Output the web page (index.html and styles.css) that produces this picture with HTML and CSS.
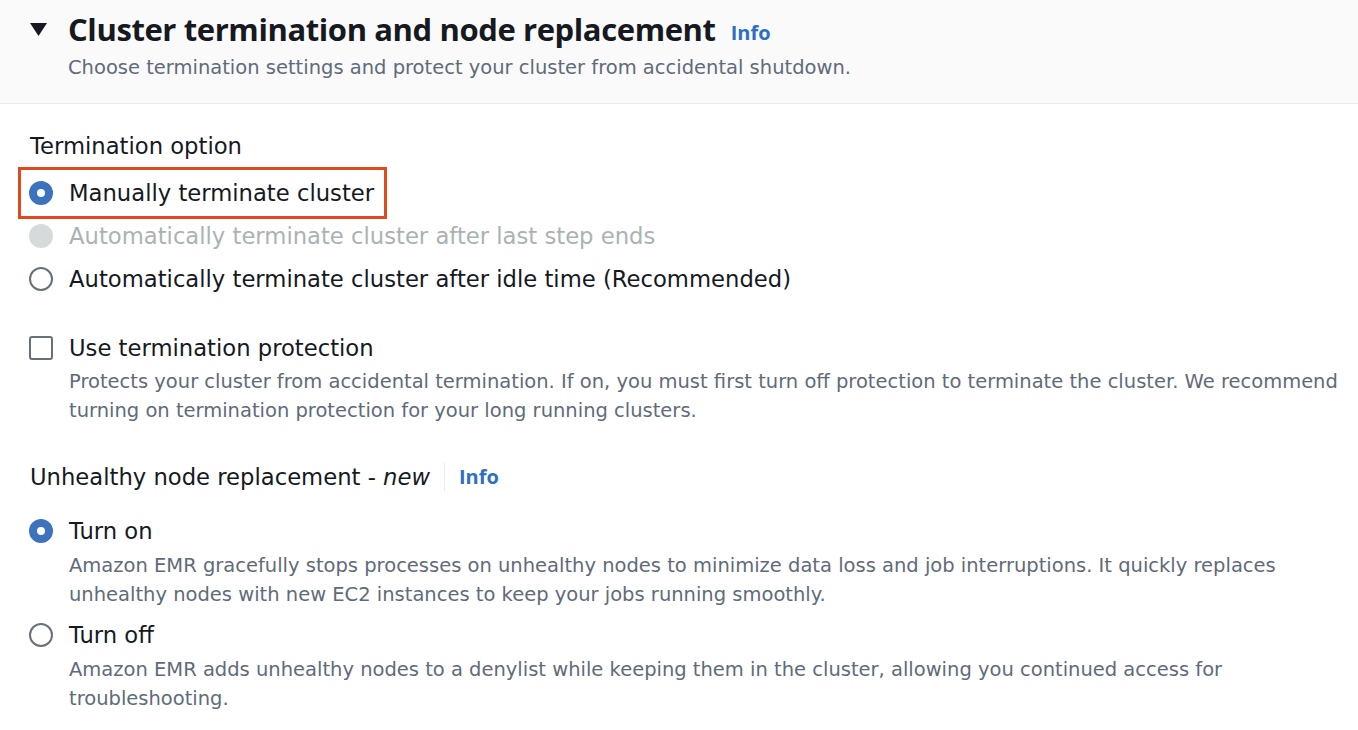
FILE: index.html
```html
<!DOCTYPE html>
<html lang="en">
<head>
<meta charset="utf-8">
<title>Cluster termination and node replacement</title>
<link rel="stylesheet" href="styles.css">
</head>
<body>
<section class="panel">
  <header class="panel-head">
    <div class="head-row">
      <svg class="caret" width="17" height="13" viewBox="0 0 17 13" aria-hidden="true"><polygon points="0,0 17,0 8.5,13" fill="#16191f"/></svg>
      <h2 class="title">Cluster termination and node replacement</h2>
      <a class="info info-head" href="#">Info</a>
    </div>
    <p class="head-desc">Choose termination settings and protect your cluster from accidental shutdown.</p>
  </header>

  <div class="panel-body">
    <div class="field-label">Termination option</div>
    <div class="radio-group">
      <div class="choice-line"><label class="choice highlighted"><span class="radio checked"></span><span class="choice-text">Manually terminate cluster</span></label></div>
      <div class="choice-line"><label class="choice disabled"><span class="radio dis"></span><span class="choice-text">Automatically terminate cluster after last step ends</span></label></div>
      <div class="choice-line"><label class="choice"><span class="radio"></span><span class="choice-text">Automatically terminate cluster after idle time (Recommended)</span></label></div>
    </div>

    <div class="check-block">
      <label class="choice"><span class="checkbox"></span><span class="choice-text">Use termination protection</span></label>
      <p class="desc">Protects your cluster from accidental termination. If on, you must first turn off protection to terminate the cluster. We recommend turning on termination protection for your long running clusters.</p>
    </div>

    <div class="field-label label-row">
      <span>Unhealthy node replacement - <em>new</em></span>
      <span class="sep"></span>
      <a class="info" href="#">Info</a>
    </div>

    <div class="option-block first">
      <label class="choice"><span class="radio checked"></span><span class="choice-text">Turn on</span></label>
      <p class="desc">Amazon EMR gracefully stops processes on unhealthy nodes to minimize data loss and job interruptions. It quickly replaces unhealthy nodes with new EC2 instances to keep your jobs running smoothly.</p>
    </div>
    <div class="option-block">
      <label class="choice"><span class="radio"></span><span class="choice-text">Turn off</span></label>
      <p class="desc">Amazon EMR adds unhealthy nodes to a denylist while keeping them in the cluster, allowing you continued access for troubleshooting.</p>
    </div>
  </div>
</section>
</body>
</html>
```

FILE: styles.css
```css
* { box-sizing: border-box; }
html, body { margin: 0; padding: 0; background: #ffffff; }
body {
  font-family: "DejaVu Sans", "Open Sans", sans-serif;
  color: #16191f;
  width: 1358px;
  height: 730px;
  overflow: hidden;
}
.panel { width: 100%; }
.panel-head {
  background: #fafafa;
  border-bottom: 1px solid #e9ebed;
  height: 104px;
  padding: 10px 0 0 30px;
}
.head-row {
  display: flex;
  align-items: center;
  height: 38px;
}
.caret { flex: none; margin-right: 21px; margin-top: 0; }
.title {
  margin: 0;
  font-family: "Open Sans", "Noto Sans", sans-serif;
  font-size: 31px;
  font-weight: 700;
  line-height: 38px;
  color: #16191f;
  letter-spacing: -0.4px;
}
.info {
  font-family: "Open Sans", "Noto Sans", sans-serif;
  color: #2f6fc0;
  font-weight: 700;
  text-decoration: none;
  font-size: 20px;
}
.info-head { margin-left: 15px; margin-top: 6px; }
.head-desc {
  margin: 6px 0 0 38px;
  font-size: 19.5px;
  line-height: 28px;
  color: #5f6b7a;
}
.panel-body { padding: 27px 0 0 29px; }
.field-label {
  font-size: 22.7px;
  line-height: 30px;
  margin-left: 1px;
}
.radio-group { margin-top: 17px; display: flex; flex-direction: column; gap: 13px; }
.choice-line { display: flex; }
.choice {
  display: inline-flex;
  align-items: center;
  gap: 16px;
  font-size: 22.7px;
  line-height: 30px;
  height: 30px;
}
.choice.highlighted {
  outline: 3px solid #e2491c;
  outline-offset: 8px;
  padding-right: 2px;
}
.choice.disabled { color: #aab3b3; }
.radio {
  flex: none;
  width: 24px;
  height: 24px;
  border-radius: 50%;
  border: 2px solid #687078;
  background: #fff;
}
.radio.checked { border: 8px solid #3c73be; }
.radio.dis { border: none; background: #d5dbdb; }
.checkbox {
  flex: none;
  width: 24px;
  height: 24px;
  border-radius: 3px;
  border: 2px solid #687078;
  background: #fff;
}
.check-block { margin-top: 39px; }
.desc {
  margin: 3px 0 0 40px;
  font-size: 19.5px;
  line-height: 29px;
  color: #5f6b7a;
}
.option-block .desc { margin-top: 4px; }
.label-row {
  margin-top: 37px;
  display: flex;
  align-items: center;
}
.label-row em { font-style: italic; }
.sep {
  width: 1px;
  height: 28px;
  background: #e9ebed;
  margin: 0 14px 0 14px;
}
.option-block.first { margin-top: 24px; }
.option-block { margin-top: 11px; }
```
